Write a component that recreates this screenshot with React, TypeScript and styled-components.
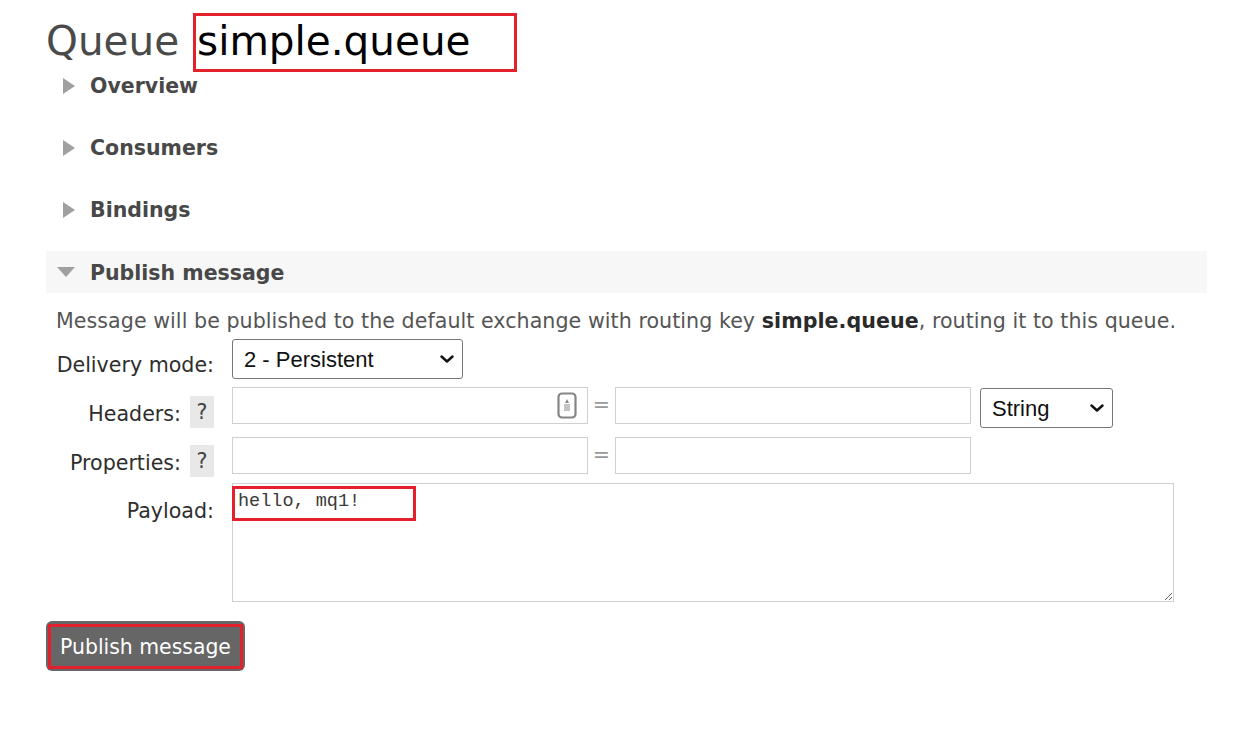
import React from "react";
import styled, { createGlobalStyle } from "styled-components";

const GlobalStyle = createGlobalStyle`
  html, body { margin: 0; padding: 0; background: #fff; }
  body {
    font-family: "DejaVu Sans", Verdana, sans-serif;
    font-size: 20.6px;
    color: #444;
  }
  * { box-sizing: border-box; }
`;

const RED = "#e3202b";

const Page = styled.div`
  padding-left: 46px;
  width: 1207px;
`;

const Title = styled.h1`
  margin: 0;
  padding-top: 13px;
  display: flex;
  align-items: flex-start;
  gap: 14px;
  font-size: 40.5px;
  font-weight: normal;
  line-height: 48px;
`;

const TitleWord = styled.span`
  padding-top: 4px;
  color: #4a4a4a;
`;

const MarkedName = styled.span`
  display: block;
  width: 324px;
  border: 3px solid ${RED};
  padding: 1px 0 4px 1px;
  color: #000;
`;

const SectionHead = styled.div<{ $open?: boolean; $mt: number }>`
  display: flex;
  align-items: center;
  gap: 15px;
  height: ${(p) => (p.$open ? 42 : 24)}px;
  margin-top: ${(p) => p.$mt}px;
  padding-left: ${(p) => (p.$open ? 11 : 17)}px;
  padding-top: ${(p) => (p.$open ? 2 : 0)}px;
  background: ${(p) => (p.$open ? "#f7f7f7" : "transparent")};
  font-weight: bold;
  font-size: 20.5px;
  line-height: 24px;
  color: #484848;
`;

const Arrow = styled.span<{ $open?: boolean }>`
  display: block;
  width: 0;
  height: 0;
  ${(p) =>
    p.$open
      ? `border-top: 10px solid #a0a0a0;
         border-left: 9px solid transparent;
         border-right: 9px solid transparent;
         margin-top: -2px;`
      : `border-left: 12px solid #a0a0a0;
         border-top: 8.5px solid transparent;
         border-bottom: 8.5px solid transparent;`}
`;

const Description = styled.p`
  margin: 16px 0 0;
  padding-left: 10px;
  line-height: 24px;
  color: #555;
  white-space: nowrap;
  letter-spacing: 0.05px;

  b { color: #2a2a2a; }
`;

const FormRow = styled.div<{ $mt: number }>`
  display: grid;
  grid-template-columns: 158px 1fr;
  column-gap: 18px;
  align-items: start;
  margin-top: ${(p) => p.$mt}px;
  padding-left: 10px;
`;

const Label = styled.div<{ $top: number }>`
  display: flex;
  justify-content: flex-end;
  align-items: center;
  gap: 9px;
  padding-top: ${(p) => p.$top}px;
  line-height: 24px;
  color: #2e2e2e;
  white-space: nowrap;
`;

const LabelText = styled.span`
  padding-top: 3px;
`;

const Help = styled.span`
  display: flex;
  align-items: center;
  justify-content: center;
  width: 24px;
  height: 32px;
  background: #e8e8e8;
  color: #444;
`;

const Fields = styled.div`
  display: flex;
  align-items: flex-start;
`;

const TextField = styled.div`
  position: relative;
  width: 356px;
  height: 37px;
`;

const TextInput = styled.input`
  width: 100%;
  height: 100%;
  border: 1px solid #d0d0d0;
  padding: 0 6px;
  font-family: "DejaVu Sans", sans-serif;
  font-size: 18px;
  outline: none;
`;

const FieldIcon = styled.svg`
  position: absolute;
  right: 11px;
  top: 5px;
`;

const Eq = styled.span`
  width: 27px;
  height: 37px;
  line-height: 37px;
  text-align: center;
  color: #9a9a9a;
`;

const SelectBox = styled.div<{ $w: number; $mt?: number; $ml?: number }>`
  position: relative;
  width: ${(p) => p.$w}px;
  height: 40px;
  margin-top: ${(p) => p.$mt ?? 0}px;
  margin-left: ${(p) => p.$ml ?? 0}px;
`;

const Select = styled.select`
  appearance: none;
  -webkit-appearance: none;
  width: 100%;
  height: 100%;
  border: 1px solid #767676;
  border-radius: 3px;
  background: #fff;
  padding: 0 0 0 11px;
  font-family: "Liberation Sans", Arial, sans-serif;
  font-size: 22px;
  color: #111;
  outline: none;
`;

const Chevron = styled.svg`
  position: absolute;
  right: 9px;
  top: 16px;
  pointer-events: none;
`;

const PayloadBox = styled.div`
  position: relative;
  width: 942px;
  height: 119px;
`;

const Payload = styled.textarea`
  display: block;
  width: 100%;
  height: 100%;
  border: 1px solid #d0d0d0;
  padding: 5px 5px;
  font-family: "Liberation Mono", "Courier New", monospace;
  font-size: 18.5px;
  line-height: 26px;
  color: #3a3a3a;
  outline: none;
`;

const Highlight = styled.span`
  position: absolute;
  left: 0;
  top: 3px;
  width: 184px;
  height: 35px;
  border: 3px solid ${RED};
  pointer-events: none;
`;

const PublishButton = styled.button`
  display: block;
  margin-top: 19px;
  width: 199px;
  height: 50px;
  padding: 3px 2px 2px;
  border: none;
  border-radius: 6px;
  background: #666;
  cursor: pointer;
`;

const ButtonInner = styled.span`
  display: flex;
  align-items: center;
  justify-content: center;
  height: 100%;
  border: 3px solid ${RED};
  font-family: "DejaVu Sans", Verdana, sans-serif;
  font-size: 20.4px;
  color: #fff;
`;

const ChevronIcon = () => (
  <Chevron width="14" height="8" viewBox="0 0 14 8">
    <path d="M1.5 1.5 L7 6.5 L12.5 1.5" fill="none" stroke="#111" strokeWidth="2.4" strokeLinecap="round" strokeLinejoin="round" />
  </Chevron>
);

const sections = [
  { name: "Overview", mt: 2 },
  { name: "Consumers", mt: 38 },
  { name: "Bindings", mt: 38 },
];

export default function App() {
  return (
    <Page>
      <GlobalStyle />
      <Title>
        <TitleWord>Queue</TitleWord>
        <MarkedName>simple.queue</MarkedName>
      </Title>

      {sections.map((s) => (
        <SectionHead key={s.name} $mt={s.mt}>
          <Arrow />
          {s.name}
        </SectionHead>
      ))}

      <SectionHead $open $mt={29}>
        <Arrow $open />
        Publish message
      </SectionHead>

      <Description>
        Message will be published to the default exchange with routing key <b>simple.queue</b>, routing it to this queue.
      </Description>

      <FormRow $mt={6}>
        <Label $top={14}>Delivery mode:</Label>
        <SelectBox $w={231}>
          <Select defaultValue="2">
            <option value="1">1 - Non-persistent</option>
            <option value="2">2 - Persistent</option>
          </Select>
          <ChevronIcon />
        </SelectBox>
      </FormRow>

      <FormRow $mt={8}>
        <Label $top={9}>
          <LabelText>Headers:</LabelText>
          <Help>?</Help>
        </Label>
        <Fields>
          <TextField>
            <TextInput />
            <FieldIcon width="20" height="27" viewBox="0 0 20 27">
              <rect x="1.5" y="1.5" width="17" height="24" rx="3.5" fill="#fff" stroke="#858585" strokeWidth="2.2" />
              <path d="M10 7 L8 11 L12 11 Z" fill="#8a8a8a" />
              <rect x="7" y="12" width="6" height="7" fill="#c4c4c4" />
            </FieldIcon>
          </TextField>
          <Eq>=</Eq>
          <TextField>
            <TextInput />
          </TextField>
          <SelectBox $w={133} $mt={1} $ml={9}>
            <Select defaultValue="string">
              <option value="string">String</option>
              <option value="number">Number</option>
              <option value="boolean">Boolean</option>
              <option value="list">List</option>
            </Select>
            <ChevronIcon />
          </SelectBox>
        </Fields>
      </FormRow>

      <FormRow $mt={9}>
        <Label $top={8}>
          <LabelText>Properties:</LabelText>
          <Help>?</Help>
        </Label>
        <Fields>
          <TextField>
            <TextInput />
          </TextField>
          <Eq>=</Eq>
          <TextField>
            <TextInput />
          </TextField>
        </Fields>
      </FormRow>

      <FormRow $mt={6}>
        <Label $top={16}>Payload:</Label>
        <PayloadBox>
          <Payload defaultValue="hello, mq1!" spellCheck={false} />
          <Highlight />
        </PayloadBox>
      </FormRow>

      <PublishButton>
        <ButtonInner>Publish message</ButtonInner>
      </PublishButton>
    </Page>
  );
}
